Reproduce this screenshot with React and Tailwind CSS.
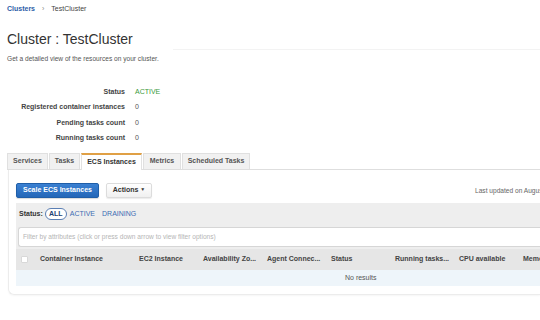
import React from 'react';

const tabs = [
    { label: 'Services', w: 'w-[41px]' },
    { label: 'Tasks', w: 'w-[31px]' },
    { label: 'ECS Instances', w: 'w-[61px]', active: true },
    { label: 'Metrics', w: 'w-[38px]' },
    { label: 'Scheduled Tasks', w: 'w-[68px]' },
];

const details = [
    { label: 'Status', value: 'ACTIVE', green: true },
    { label: 'Registered container instances', value: '0' },
    { label: 'Pending tasks count', value: '0' },
    { label: 'Running tasks count', value: '0' },
];

const columns = [
    { label: 'Container Instance', w: 'w-[99px]' },
    { label: 'EC2 Instance', w: 'w-[64px]' },
    { label: 'Availability Zo...', w: 'w-[64px]' },
    { label: 'Agent Connec...', w: 'w-[64px]' },
    { label: 'Status', w: 'w-[64px]' },
    { label: 'Running tasks...', w: 'w-[64px]' },
    { label: 'CPU available', w: 'w-[64px]' },
    { label: 'Memory available', w: 'w-[64px]' },
];

const App = () => {
    return (
        <div className="w-[540px] h-[320px] overflow-hidden bg-white text-[#333] font-['Liberation_Sans',Arial,sans-serif]">
            <div className="pl-[7px]">
                {/* Breadcrumb */}
                <div className="h-[19px] flex items-center text-[7px] whitespace-nowrap">
                    <span className="font-bold text-[#2d5ea8]">Clusters</span>
                    <span className="mx-[7px] text-[#888]">›</span>
                    <span className="text-[#444]">TestCluster</span>
                </div>

                <h1 className="mt-[12px] h-[16px] leading-[16px] text-[14px] text-[#333] whitespace-nowrap">Cluster : TestCluster</h1>
                <div className="ml-[166px] mt-[2px] h-px bg-[#f3f3f3]" />
                <p className="mt-[4px] text-[6.6px] leading-[9px] text-[#555] whitespace-nowrap">
                    Get a detailed view of the resources on your cluster.
                </p>

                {/* Cluster details */}
                <div className="mt-[21px] grid grid-cols-[118px_1fr] gap-x-[10px] text-[7px]">
                    {details.map((d) => (
                        <React.Fragment key={d.label}>
                            <div className="h-[15.5px] flex items-center justify-end font-bold text-[#444] whitespace-nowrap">{d.label}</div>
                            <div className={`h-[15.5px] flex items-center ${d.green ? 'text-[#3c9a3c]' : 'text-[#555]'}`}>{d.value}</div>
                        </React.Fragment>
                    ))}
                </div>

                {/* Tabs */}
                <div className="mt-[7px] flex items-end gap-px border-b border-[#dedede]">
                    {tabs.map((t) => (
                        <div
                            key={t.label}
                            className={`${t.w} shrink-0 flex items-center justify-center text-[7px] font-bold whitespace-nowrap border-x ${
                                t.active
                                    ? 'bg-white border-t-2 border-t-[#e0a045] border-x-[#e2e2e2] text-[#333] -mb-px h-[17px]'
                                    : 'h-[16px] bg-[#f1f1f1] border-t border-[#e0e0e0] text-[#555]'
                            }`}
                        >
                            {t.label}
                        </div>
                    ))}
                </div>

                {/* Tab content card */}
                <div className="ml-px border-l border-b border-[#ececec] rounded-bl-[6px] shadow-[0_1px_2px_rgba(0,0,0,0.04)] pl-[7px] pt-[13px] pb-[8px]">
                    <div className="flex items-center text-[7px] whitespace-nowrap">
                        <button className="shrink-0 w-[83px] h-[15px] rounded-[2px] bg-gradient-to-b from-[#3a80d2] to-[#2467b8] border border-[#1f5ea8] text-white font-bold shadow-[0_1px_1px_rgba(0,0,0,0.15)]">
                            Scale ECS Instances
                        </button>
                        <button className="shrink-0 ml-[7px] w-[46px] h-[15px] rounded-[2px] bg-gradient-to-b from-white to-[#f0f0f0] border border-[#dcdcdc] text-[#333] font-bold shadow-[0_1px_1px_rgba(0,0,0,0.08)]">
                            Actions <span className="text-[5px] align-middle">▼</span>
                        </button>
                        <span className="shrink-0 ml-[323px] text-[6.6px] text-[#666]">Last updated on August 22, 2016 4:12:08 PM (0m ago)</span>
                    </div>

                    {/* Filter panel + table */}
                    <div className="mt-[5px] bg-[#eeeeee]">
                        <div className="h-[22px] flex items-center pl-[3px] text-[7px] whitespace-nowrap">
                            <span className="font-bold text-[#333]">Status:</span>
                            <span className="shrink-0 ml-[2px] w-[22px] h-[12px] flex items-center justify-center rounded-full border border-[#5b7fb4] bg-white text-[#1f3f72] font-bold">ALL</span>
                            <span className="ml-[3px] text-[#3c6cb3]">ACTIVE</span>
                            <span className="ml-[7px] text-[#3c6cb3]">DRAINING</span>
                        </div>
                        <div className="pl-[2px] pt-[2px] pb-[2px]">
                            <div className="h-[20px] flex items-center pl-[4px] bg-white border border-[#d6d6d6] rounded-l-[3px] border-r-0 text-[6.6px] text-[#b5b5b5] whitespace-nowrap">
                                Filter by attributes (click or press down arrow to view filter options)
                            </div>
                        </div>
                        <div className="h-[21px] flex items-center bg-[#e6e6e6] text-[7px] font-bold text-[#444] whitespace-nowrap">
                            <div className="shrink-0 w-[24px] pl-[5px] flex items-center">
                                <div className="w-[7px] h-[7px] bg-white border border-[#d8d8d8] rounded-[1px]" />
                            </div>
                            {columns.map((c) => (
                                <div key={c.label} className={`${c.w} shrink-0`}>{c.label}</div>
                            ))}
                        </div>
                        <div className="h-[16px] flex items-center pl-[329px] bg-[#eef5fa] text-[7px] text-[#555]">
                            No results
                        </div>
                    </div>
                </div>
            </div>
        </div>
    );
};

export default App;
